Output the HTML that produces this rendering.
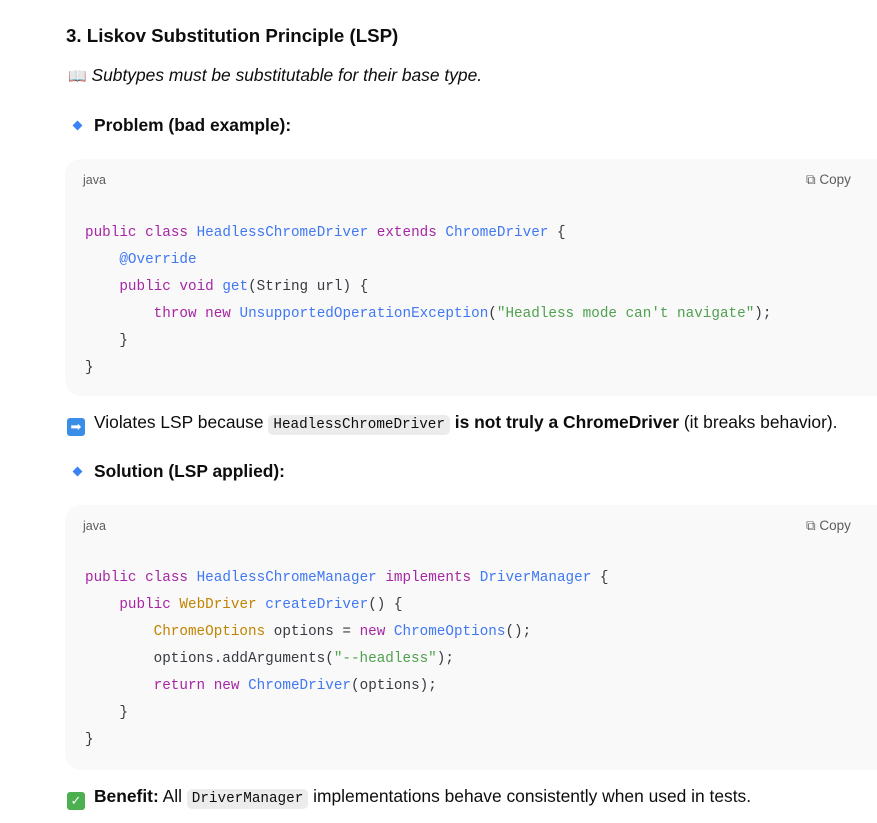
<!DOCTYPE html>
<html><head><meta charset="utf-8"><style>
body{margin:0;background:#fff;width:877px;height:823px;overflow:hidden;font-family:"Liberation Sans",sans-serif;color:#0d0d0d;position:relative}
.a{position:absolute;white-space:nowrap}
h3{position:absolute;left:66px;top:25px;margin:0;font-size:18.7px;font-weight:bold}
.p{font-size:17.4px}
.box{position:absolute;left:65px;width:830px;background:#f9f9f9;border-radius:16px}
.lang{position:absolute;left:18px;top:14px;font-size:12.5px;color:#5d5d5d}
.copy{position:absolute;left:741px;top:13px;font-size:13.5px;color:#5d5d5d}
pre{position:absolute;left:20px;margin:0;font-family:"Liberation Mono",monospace;font-size:14.3px;line-height:27px;color:#383a42}
.k{color:#a626a4}.c{color:#4078f2}.s{color:#50a14f}.n{color:#c18401}
code{font-family:"Liberation Mono",monospace;font-size:14.3px;background:#ececec;border-radius:5px;padding:2px 5px}
.d{display:inline-block;width:7px;height:7px;background:#3b82f6;transform:rotate(45deg);margin:0 13px 2px 8px}
.ic{display:inline-block;width:18px;height:18px;border-radius:3px;vertical-align:-3px;margin-right:9px;color:#fff;font-size:13px;text-align:center;line-height:18px}
</style></head><body>
<h3>3. Liskov Substitution Principle (LSP)</h3>
<div class="a p" style="left:68px;top:65px"><span style="font-size:15px;color:#5a8fd8">📖</span> <i>Subtypes must be substitutable for their base type.</i></div>
<div class="a p" style="left:66px;top:115px"><span class="d"></span><b>Problem (bad example):</b></div>
<div class="box" style="top:159px;height:237px">
<div class="lang">java</div><div class="copy">⧉ Copy</div>
<pre style="top:61px"><span class="k">public</span> <span class="k">class</span> <span class="c">HeadlessChromeDriver</span> <span class="k">extends</span> <span class="c">ChromeDriver</span> {
    <span class="c">@Override</span>
    <span class="k">public</span> <span class="k">void</span> <span class="c">get</span>(String url) {
        <span class="k">throw</span> <span class="k">new</span> <span class="c">UnsupportedOperationException</span>(<span class="s">"Headless mode can't navigate"</span>);
    }
}</pre></div>
<div class="a p" style="left:67px;top:412px"><span class="ic" style="background:#3b8ee8">➡</span>Violates LSP because <code>HeadlessChromeDriver</code> <b>is not truly a ChromeDriver</b> (it breaks behavior).</div>
<div class="a p" style="left:66px;top:461px"><span class="d"></span><b>Solution (LSP applied):</b></div>
<div class="box" style="top:505px;height:265px">
<div class="lang">java</div><div class="copy">⧉ Copy</div>
<pre style="top:60px"><span class="k">public</span> <span class="k">class</span> <span class="c">HeadlessChromeManager</span> <span class="k">implements</span> <span class="c">DriverManager</span> {
    <span class="k">public</span> <span class="n">WebDriver</span> <span class="c">createDriver</span>() {
        <span class="n">ChromeOptions</span> options = <span class="k">new</span> <span class="c">ChromeOptions</span>();
        options.addArguments(<span class="s">"--headless"</span>);
        <span class="k">return</span> <span class="k">new</span> <span class="c">ChromeDriver</span>(options);
    }
}</pre></div>
<div class="a p" style="left:67px;top:786px"><span class="ic" style="background:#4caf50">✓</span><b>Benefit:</b> All <code>DriverManager</code> implementations behave consistently when used in tests.</div>
</body></html>
